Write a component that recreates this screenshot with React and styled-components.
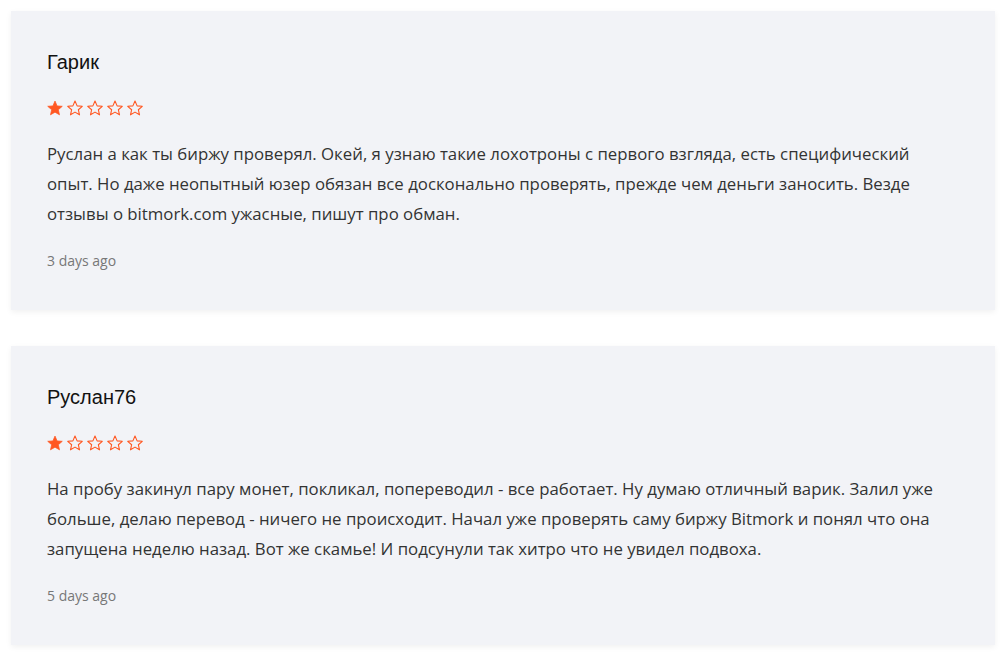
import React from 'react';
import styled, { createGlobalStyle } from 'styled-components';

const GlobalStyle = createGlobalStyle`
    body {
        margin: 0;
        background: #fff;
        font-family: "Open Sans", sans-serif;
    }
`;

const List = styled.div`
    display: flex;
    flex-direction: column;
    gap: 36px;
    padding: 11px 8px 11px 11px;
`;

const Card = styled.div`
    background: #f2f3f7;
    box-shadow: 0 2px 6px rgba(0, 0, 0, .06);
    padding: 39px 50px 36px 36px;
    min-height: 299px;
    box-sizing: border-box;
`;

const Name = styled.h3`
    font-family: "Liberation Sans", Arial, sans-serif;
    font-size: 20px;
    font-weight: normal;
    color: #111;
    margin: 0 0 26px;
    line-height: 24px;
`;

const Stars = styled.div`
    display: flex;
    gap: 4px;
    margin-bottom: 23px;
`;

const StarIcon = styled.svg`
    width: 16px;
    height: 16px;
    display: block;
`;

const Text = styled.p`
    font-size: 16.8px;
    line-height: 30px;
    color: #333;
    margin: 0 0 22px;
`;

const Date = styled.div`
    font-size: 14px;
    color: #777;
    line-height: 20px;
`;

function Star({ filled }) {
    return (
        <StarIcon viewBox="1 1.5 22 21">
            <path
                d="M12 2.5l2.9 6.6 7.1.6-5.4 4.7 1.6 7-6.2-3.7-6.2 3.7 1.6-7L2 9.7l7.1-.6z"
                fill={filled ? '#ff5722' : 'none'}
                stroke="#ff5722"
                strokeWidth={filled ? 1 : 1.5}
                strokeLinejoin="round"
            />
        </StarIcon>
    );
}

const reviews = [
    {
        name: 'Гарик',
        rating: 1,
        text: 'Руслан а как ты биржу проверял. Окей, я узнаю такие лохотроны с первого взгляда, есть специфический опыт. Но даже неопытный юзер обязан все досконально проверять, прежде чем деньги заносить. Везде отзывы о bitmork.com ужасные, пишут про обман.',
        date: '3 days ago',
    },
    {
        name: 'Руслан76',
        rating: 1,
        text: 'На пробу закинул пару монет, покликал, попереводил - все работает. Ну думаю отличный варик. Залил уже больше, делаю перевод - ничего не происходит. Начал уже проверять саму биржу Bitmork и понял что она запущена неделю назад. Вот же скамье! И подсунули так хитро что не увидел подвоха.',
        date: '5 days ago',
    },
];

export default function App() {
    return (
        <>
            <GlobalStyle />
            <List>
                {reviews.map((r) => (
                    <Card key={r.name}>
                        <Name>{r.name}</Name>
                        <Stars>
                            {[0, 1, 2, 3, 4].map((i) => (
                                <Star key={i} filled={i < r.rating} />
                            ))}
                        </Stars>
                        <Text>{r.text}</Text>
                        <Date>{r.date}</Date>
                    </Card>
                ))}
            </List>
        </>
    );
}
